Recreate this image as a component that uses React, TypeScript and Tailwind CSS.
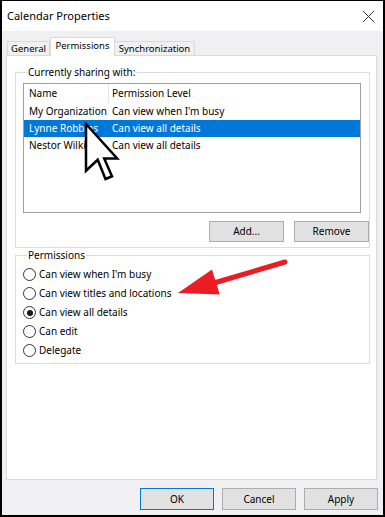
const font = { fontFamily: '"Noto Sans", "Open Sans", sans-serif' };

const rows = [
  { name: "My Organization", level: "Can view when I'm busy", selected: false },
  { name: "Lynne Robbins", level: "Can view all details", selected: true },
  { name: "Nestor Wilkins", level: "Can view all details", selected: false },
];

const options = [
  { label: "Can view when I'm busy", checked: false },
  { label: "Can view titles and locations", checked: false },
  { label: "Can view all details", checked: true },
  { label: "Can edit", checked: false },
  { label: "Delegate", checked: false },
];

function Button({ label, primary }: { label: string; primary?: boolean }) {
  return (
    <button
      className={`flex h-[22px] w-[74px] items-center justify-center border bg-[#e1e1e1] text-[10px] text-black ${
        primary ? "border-[#0078d7]" : "border-[#adadad]"
      }`}
    >
      {label}
    </button>
  );
}

function Radio({ label, checked }: { label: string; checked: boolean }) {
  return (
    <div className="flex h-[19px] items-center gap-[3px]">
      <span className="flex h-[13px] w-[13px] items-center justify-center rounded-full border border-[#333333] bg-white">
        {checked && <span className="h-[6px] w-[6px] rounded-full bg-[#1a1a1a]" />}
      </span>
      <span className="text-[10px] leading-[13px] text-black">{label}</span>
    </div>
  );
}

export default function App() {
  return (
    <div className="relative h-[517px] w-[385px] bg-black px-[2px] pt-px pb-[2px]" style={font}>
      <div className="flex h-full flex-col bg-[#f0eff1]">
        {/* title bar */}
        <div className="flex h-[30px] items-center justify-between bg-white pl-[5px] pr-[8px]">
          <span className="text-[11px] text-black">Calendar Properties</span>
          <svg width="13" height="13" viewBox="0 0 13 13">
            <path d="M1 1 L12 12 M12 1 L1 12" stroke="#333" strokeWidth="1" fill="none" />
          </svg>
        </div>

        {/* tabs */}
        <div className="flex h-[24px] items-end pl-[5px]">
          <div className="flex h-[14px] w-[43px] items-center justify-center border border-b-0 border-[#d9d9d9] bg-[#f0f0f0] text-[9.5px] leading-[12px] text-black">
            General
          </div>
          <div className="relative z-10 -mb-px flex h-[19px] w-[65px] items-center justify-center border border-b-0 border-[#d9d9d9] bg-white pb-[3px] text-[9.5px] leading-[12px] text-black">
            Permissions
          </div>
          <div className="flex h-[14px] w-[80px] items-center justify-center border border-b-0 border-l-0 border-[#d9d9d9] bg-[#f0f0f0] text-[9.5px] leading-[12px] text-black">
            Synchronization
          </div>
        </div>

        {/* tab page */}
        <div className="ml-[4px] mr-[6px] flex h-[425px] flex-col border border-[#d9d9d9] bg-white pl-[8px] pr-[6px]">
          <fieldset className="mt-[10px] border border-[#dcdcdc] pb-[5px] pl-[7px]">
            <legend className="ml-[4px] px-[1px] text-[10px] leading-[13px] text-black">
              Currently sharing with:
            </legend>
            <div className="mr-[8px] mt-[4px] h-[130px] border border-[#a0a0a0] bg-white">
              <div className="flex h-[19px] items-center text-[10px] text-black">
                <div className="flex h-full w-[85px] items-center border-r border-[#e5e5e5] pl-[5px]">Name</div>
                <div className="pl-[3px]">Permission Level</div>
              </div>
              {rows.map((r) => (
                <div
                  key={r.name}
                  className={`flex h-[17px] items-center text-[10px] ${
                    r.selected ? "bg-[#0078d7] text-white" : "text-black"
                  }`}
                >
                  <div className="w-[85px] whitespace-nowrap pl-[5px]">{r.name}</div>
                  <div className="whitespace-nowrap pl-[3px]">{r.level}</div>
                </div>
              ))}
            </div>
            <div className="mt-[8px] flex justify-end gap-[10px]">
              <button className="flex h-[21px] w-[75px] items-center justify-center border border-[#adadad] bg-[#e1e1e1] text-[10px] text-black">
                Add...
              </button>
              <button className="flex h-[21px] w-[75px] items-center justify-center border border-[#adadad] bg-[#e1e1e1] text-[10px] text-black">
                Remove
              </button>
            </div>
          </fieldset>

          <fieldset className="mt-[1px] border border-[#dcdcdc] pb-[3px] pl-[7px] pt-[3px]">
            <legend className="ml-[4px] px-[1px] text-[10px] leading-[13px] text-black">Permissions</legend>
            {options.map((o) => (
              <Radio key={o.label} label={o.label} checked={o.checked} />
            ))}
          </fieldset>
        </div>

        {/* footer */}
        <div className="flex flex-1 items-start justify-end gap-[8px] pr-[5px] pt-[8px]">
          <Button label="OK" primary />
          <Button label="Cancel" />
          <Button label="Apply" />
        </div>
      </div>

      {/* annotation arrow */}
      <svg className="absolute left-[170px] top-[255px]" width="125" height="50" viewBox="0 0 125 50">
        <line x1="115" y1="7" x2="44" y2="28" stroke="#ec1c24" strokeWidth="5" strokeLinecap="round" />
        <polygon points="8,38 42,14.5 49.7,39.5" fill="#ec1c24" />
      </svg>

      {/* mouse cursor */}
      <svg className="absolute left-[84px] top-[122px]" width="36" height="60" viewBox="0 0 36 60">
        <polygon
          points="2,2 2,48.75 13.7,37.75 21.5,57 28,54.25 20.2,36.4 33.2,36.4"
          fill="white"
          stroke="black"
          strokeWidth="2.5"
          strokeLinejoin="miter"
        />
      </svg>
    </div>
  );
}
